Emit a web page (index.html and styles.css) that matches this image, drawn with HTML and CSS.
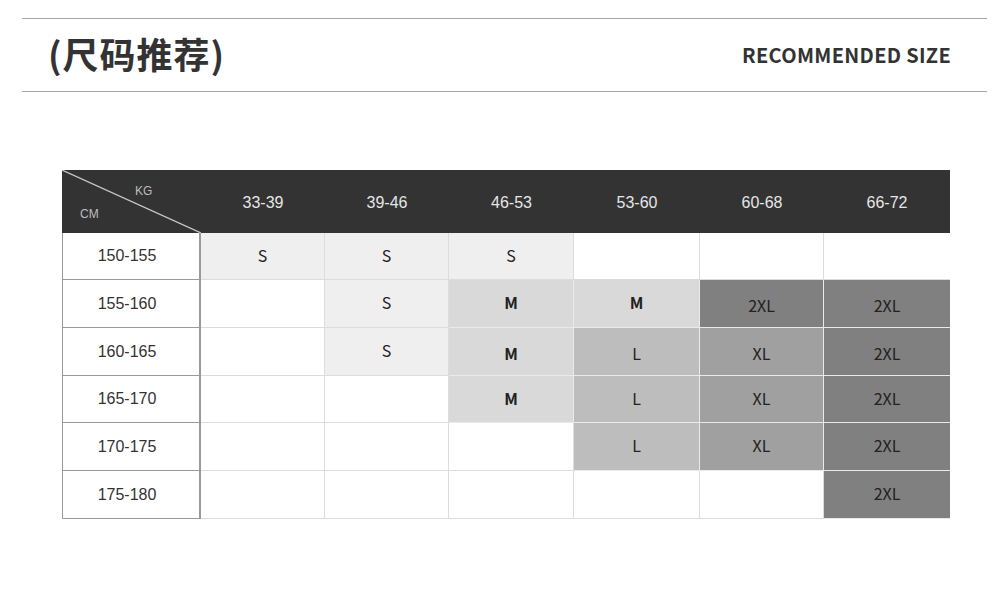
FILE: index.html
```html
<!DOCTYPE html>
<html lang="zh">
<head>
<meta charset="utf-8">
<title>尺码推荐</title>
<link rel="stylesheet" href="styles.css">
</head>
<body>
<header class="heading">
  <h1 class="title">(尺码推荐)</h1>
  <div class="subtitle">RECOMMENDED SIZE</div>
</header>

<section class="chart">
  <div class="corner">
    <svg class="diag" viewBox="0 0 139 63" preserveAspectRatio="none"><line x1="0" y1="0" x2="139" y2="63" stroke="#c8c8c8" stroke-width="1.2"/></svg>
    <span class="kg">KG</span>
    <span class="cm">CM</span>
  </div>
  <div class="hd">33-39</div>
  <div class="hd">39-46</div>
  <div class="hd">46-53</div>
  <div class="hd">53-60</div>
  <div class="hd">60-68</div>
  <div class="hd">66-72</div>

  <div class="label">150-155</div>
  <div class="cell s">S</div>
  <div class="cell s">S</div>
  <div class="cell s">S</div>
  <div class="cell"></div>
  <div class="cell"></div>
  <div class="cell last"></div>

  <div class="label">155-160</div>
  <div class="cell"></div>
  <div class="cell s">S</div>
  <div class="cell m">M</div>
  <div class="cell m">M</div>
  <div class="cell xxl low">2XL</div>
  <div class="cell xxl last low">2XL</div>

  <div class="label">160-165</div>
  <div class="cell"></div>
  <div class="cell s">S</div>
  <div class="cell m low">M</div>
  <div class="cell l low">L</div>
  <div class="cell xl low">XL</div>
  <div class="cell xxl last low">2XL</div>

  <div class="label">165-170</div>
  <div class="cell"></div>
  <div class="cell"></div>
  <div class="cell m">M</div>
  <div class="cell l">L</div>
  <div class="cell xl">XL</div>
  <div class="cell xxl last">2XL</div>

  <div class="label">170-175</div>
  <div class="cell"></div>
  <div class="cell"></div>
  <div class="cell"></div>
  <div class="cell l">L</div>
  <div class="cell xl">XL</div>
  <div class="cell xxl last">2XL</div>

  <div class="label">175-180</div>
  <div class="cell"></div>
  <div class="cell"></div>
  <div class="cell"></div>
  <div class="cell"></div>
  <div class="cell"></div>
  <div class="cell xxl last">2XL</div>
</section>
</body>
</html>
```

FILE: styles.css
```css
* { box-sizing: border-box; }

html, body {
  margin: 0;
  padding: 0;
  background: #ffffff;
}

body {
  width: 1000px;
  height: 607px;
  overflow: hidden;
  font-family: "Noto Sans CJK SC", "Noto Sans", sans-serif;
  color: #333;
}

.heading {
  margin: 18px 13px 0 22px;
  height: 74px;
  border-top: 1px solid #a6a6a6;
  border-bottom: 1px solid #a6a6a6;
  display: flex;
  align-items: center;
  justify-content: space-between;
  padding: 0 36px 0 26px;
}

.title {
  margin: 0;
  font-size: 36px;
  font-weight: 700;
  color: #333;
  line-height: 1;
  letter-spacing: 1px;
  position: relative;
  top: -2px;
}

.subtitle {
  font-size: 20px;
  font-weight: 700;
  color: #333;
  letter-spacing: 0.3px;
  line-height: 1;
}

.chart {
  margin: 78px 0 0 62px;
  width: 888px;
  display: grid;
  grid-template-columns: 139px 124px 124px 125px 126px 124px 126px;
  grid-template-rows: 63px 47px 48px 48px 47px 48px 48px;
}

.corner {
  position: relative;
  background: #333;
}

.diag {
  position: absolute;
  left: 0;
  top: 0;
  width: 139px;
  height: 63px;
}

.kg, .cm {
  position: absolute;
  font-family: "Liberation Sans", Arial, sans-serif;
  font-size: 12px;
  color: #bdbdbd;
  line-height: 1;
}

.kg { left: 73px; top: 15px; }
.cm { left: 18px; top: 38px; }

.hd {
  background: #333;
  color: #e6e6e6;
  font-family: "Liberation Sans", Arial, sans-serif;
  font-size: 16px;
  display: flex;
  align-items: center;
  justify-content: center;
  padding-top: 2px;
}

.label {
  border-left: 1px solid #9a9a9a;
  border-right: 2px solid #9a9a9a;
  border-bottom: 1px solid #9a9a9a;
  background: #fff;
  font-family: "Liberation Sans", Arial, sans-serif;
  font-size: 16px;
  color: #333;
  display: flex;
  align-items: center;
  justify-content: center;
  padding-right: 8px;
}

.cell {
  border-right: 1px solid #dcdcdc;
  border-bottom: 1px solid #dcdcdc;
  background: #fff;
  display: flex;
  align-items: center;
  justify-content: center;
  font-size: 16px;
  color: #222;
  padding-bottom: 3px;
}

.cell.last { border-right: none; }

.cell.low { padding-bottom: 0; padding-top: 3px; }

.s   { background: #efefef; }
.m   { background: #d9d9d9; font-weight: 700; }
.l   { background: #bdbdbd; }
.xl  { background: #a0a0a0; }
.xxl { background: #808080; }

.m, .l, .xl, .xxl { border-color: #eaeaea; }
```
